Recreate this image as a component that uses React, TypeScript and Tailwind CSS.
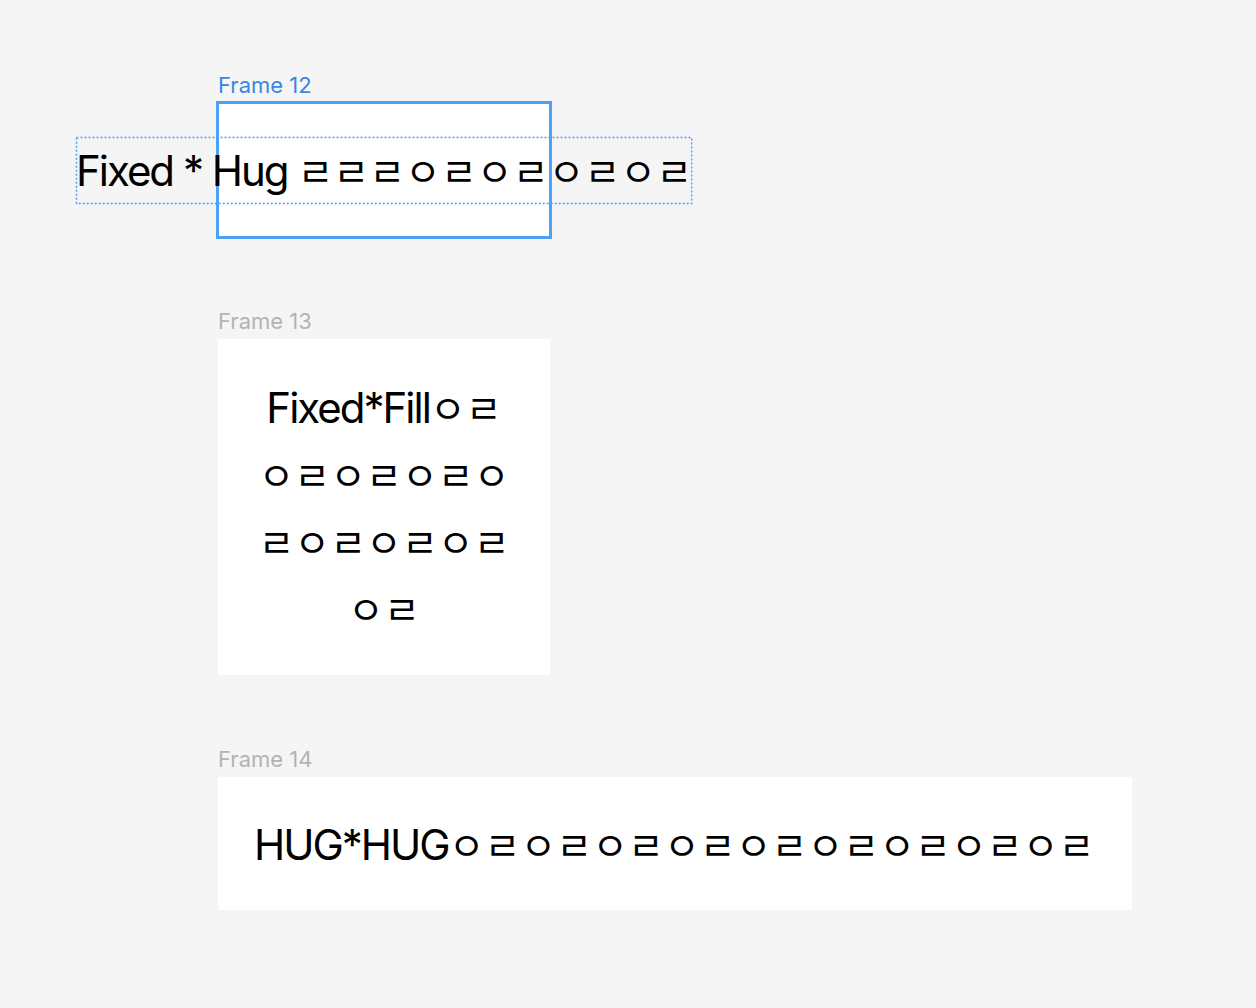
import React from "react";

// latin part of a text layer
const Latin = ({ children }: { children: string }) => (
  <span className="tracking-[-2px]">{children}</span>
);

// korean jamo part, fallback font (small line-height so it does not grow the line)
const Jamo = ({ children }: { children: string }) => (
  <span className="font-['Noto_Sans_CJK_KR',sans-serif] text-[39px] leading-[40px] tracking-normal">{children}</span>
);

const Label = ({ text, active }: { text: string; active?: boolean }) => (
  <div
    className={`font-['Inter',sans-serif] text-[22px] leading-[26px] mb-[5px] ${
      active ? "text-[#3b86e4]" : "text-[#b3b3b3]"
    }`}
  >
    {text}
  </div>
);

const textStyle = "font-['Inter','Noto_Sans_CJK_KR',sans-serif] text-[42px] leading-[67px] text-black";

const App = () => {
  return (
    <div className="w-full h-[1008px] bg-[#f5f5f5] flex flex-col items-start pl-[218px] pt-[72px]">
      {/* Frame 12 - selected */}
      <div>
        <Label text="Frame 12" active />
        <div className={`relative w-[332px] h-[134px] bg-white flex items-center justify-center outline-[3px] outline-solid outline-[#4d9ff7] -outline-offset-1 ${textStyle}`}>
          <span className="relative shrink-0 whitespace-nowrap">
            <Latin>Fixed * Hug </Latin>
            <Jamo>ㄹㄹㄹㅇㄹㅇㄹㅇㄹㅇㄹ</Jamo>
            <svg className="absolute inset-0 w-full h-full overflow-visible pointer-events-none">
              <rect
                x="0.5"
                y="0.5"
                style={{ width: "calc(100% - 1px)", height: "calc(100% - 1px)" }}
                fill="none"
                stroke="#4d9ff7"
                strokeWidth="1.5"
                strokeDasharray="2 2"
              />
            </svg>
          </span>
        </div>
      </div>

      {/* Frame 13 */}
      <div className="mt-[71px]">
        <Label text="Frame 13" />
        <div className={`w-[332px] bg-white px-[36px] pt-[35px] pb-[33px] text-center ${textStyle}`}>
          <Latin>Fixed*Fill</Latin>
          <Jamo>ㅇㄹㅇㄹㅇㄹㅇㄹㅇㄹㅇㄹㅇㄹㅇㄹㅇㄹ</Jamo>
        </div>
      </div>

      {/* Frame 14 */}
      <div className="mt-[71px]">
        <Label text="Frame 14" />
        <div className={`w-fit bg-white pl-[36px] pr-[37px] pt-[34px] pb-[32px] whitespace-nowrap ${textStyle}`}>
          <Latin>HUG*HUG</Latin>
          <Jamo>ㅇㄹㅇㄹㅇㄹㅇㄹㅇㄹㅇㄹㅇㄹㅇㄹㅇㄹ</Jamo>
        </div>
      </div>
    </div>
  );
};

export default App;
